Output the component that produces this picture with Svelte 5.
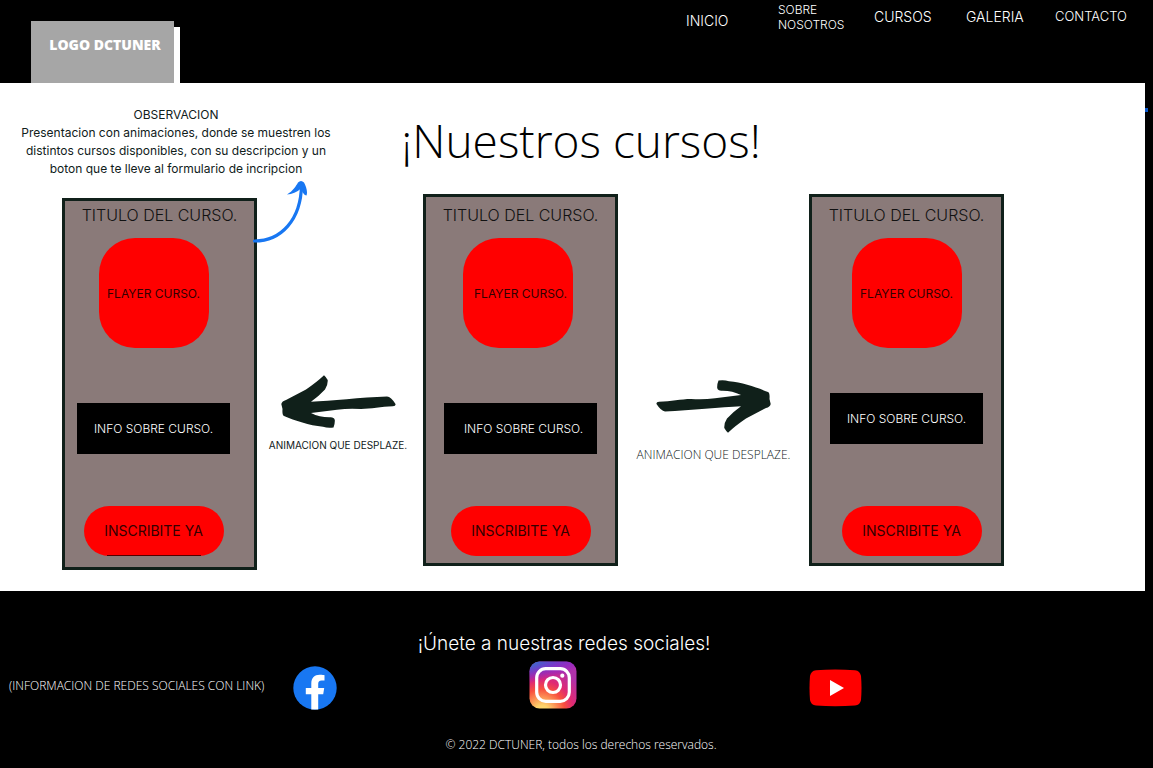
<script>
  const nav = [
    { label: 'INICIO', size: 'low' },
    { label: 'SOBRE NOSOTROS', size: 'small' },
    { label: 'CURSOS', size: '' },
    { label: 'GALERIA', size: '' },
    { label: 'CONTACTO', size: 'mid' }
  ];
</script>

{#snippet course(variant)}
  <article class="card {variant}">
    <div class="frame">
      <h2>TITULO DEL CURSO.</h2>
      <div class="flyer"><span>FLAYER CURSO.</span></div>
      <p class="info"><span>INFO SOBRE CURSO.</span></p>
      <button type="button">INSCRIBITE YA</button>
    </div>
    {#if variant === 'first'}
      <svg class="pointer" viewBox="0 0 58 64" aria-hidden="true">
        <path d="M2.500 61 C29 61 49 40 49.500 5" fill="none" stroke="#1877f2" stroke-width="3.200" stroke-linecap="round" />
        <path d="M35 14.500 C41 11 44 6 46 2.500 Q49 -.5 52 2.500 C54 6 56 12 54.500 15.500 C52.500 15.500 50 12 49 8.500 C45 12 40 14.500 35 14.500Z" fill="#1877f2" />
      </svg>
    {/if}
  </article>
{/snippet}

{#snippet arrow()}
  <svg class="arrow" viewBox="0 0 115 53" aria-hidden="true">
    <path d="M.3 29 Q1 26 5 25 L25 14.500 Q36 7 43 .3 Q45 2 46.700 5 Q47 10 44 14.500 Q38 21 30 26.700 C50 26 80 22.500 106 21.600 Q110 22 114.500 29 Q115 31 112 31.300 C100 31.500 90 34 80 34 Q68 33 56 34.700 L30 38 Q39 42.500 49 42.300 Q53 42 53.800 45 Q54 49 52.500 52.500 Q47 53.500 42 51.700 C28 50.500 14 45.500 3 41 Q1 40 1.500 34Z" fill="#10201a" />
  </svg>
{/snippet}

<div class="page">
  <header>
    <a class="logo" href="#inicio">LOGO DCTUNER</a>
    <nav>
      {#each nav as item}
        <a class={item.size} href="#{item.label.toLowerCase().replace(' ', '-')}">{item.label}</a>
      {/each}
    </nav>
  </header>

  <main>
    <i class="dot"></i>
    <section class="intro">
      <div class="note">
        OBSERVACION
        <p>Presentacion con animaciones, donde se muestren los distintos cursos disponibles, con su descripcion y un boton que te lleve al formulario de incripcion</p>
      </div>
      <h1>¡Nuestros cursos!</h1>
    </section>
    <section class="courses">
      {@render course('first')}
      <div class="slide back">
        {@render arrow()}
        <p>ANIMACION QUE DESPLAZE.</p>
      </div>
      {@render course('second')}
      <div class="slide next">
        {@render arrow()}
        <p>ANIMACION QUE DESPLAZE.</p>
      </div>
      {@render course('third')}
    </section>
  </main>

  <footer>
    <h2>¡Únete a nuestras redes sociales!</h2>
    <div class="social">
      <p>(INFORMACION DE REDES SOCIALES CON LINK)</p>
      <a href="#facebook" aria-label="Facebook">
        <svg width="44" height="44" viewBox="0 0 44 44">
          <circle cx="22" cy="22" r="21.700" fill="#1877f2" />
          <path d="M18.300 43.600V28.300H12.800V22H18.300V17.500C18.300 11.800 21.500 8.800 26.700 8.800C29 8.800 31.500 9.200 31.500 9.200V14.500H28.700C26 14.500 25.200 16 25.200 18V22H31.200L30.200 28.300H25.200V43.600Z" fill="#fff" />
        </svg>
      </a>
      <a href="#instagram" aria-label="Instagram">
        <svg class="insta" width="48" height="48" viewBox="0 0 48 48">
          <defs>
            <radialGradient id="warm" cx="13" cy="51" r="46" gradientUnits="userSpaceOnUse">
              <stop offset="0" stop-color="#ffdd75" />
              <stop offset=".15" stop-color="#ffd36b" />
              <stop offset=".5" stop-color="#f8503e" />
              <stop offset=".68" stop-color="#e02a72" />
              <stop offset="1" stop-color="#b032ab" />
            </radialGradient>
            <radialGradient id="cool" cx="0" cy="0" r="1" gradientUnits="userSpaceOnUse" gradientTransform="translate(-8 3) rotate(78) scale(21 88)">
              <stop offset="0" stop-color="#3771c8" />
              <stop offset=".13" stop-color="#3771c8" />
              <stop offset="1" stop-color="#6600ff" stop-opacity="0" />
            </radialGradient>
          </defs>
          <rect width="47" height="47" x=".5" y=".5" rx="10" fill="url(#warm)" />
          <rect width="47" height="47" x=".5" y=".5" rx="10" fill="url(#cool)" />
          <rect x="7.700" y="7.700" width="32.600" height="32.600" rx="9" fill="none" stroke="#fff" stroke-width="3.200" />
          <circle cx="24" cy="24" r="7.500" fill="none" stroke="#fff" stroke-width="3.200" />
          <circle cx="33.300" cy="14.700" r="2.100" fill="#fff" />
        </svg>
      </a>
      <a href="#youtube" aria-label="YouTube">
        <svg width="53" height="38" viewBox="0 0 53 38">
          <path d="M7 1.200Q26 -.2 46 1.200Q51 1.600 52 7Q53 19 52 31Q51 36 46 36.500Q26 37.800 7 36.500Q2 36 1 31Q0 19 1 7Q2 1.600 7 1.200Z" fill="#f00" />
          <path d="M21 11L35 19L21 27Z" fill="#fff" />
        </svg>
      </a>
    </div>
    <small>© 2022 DCTUNER, todos los derechos reservados.</small>
  </footer>
</div>

<style>
  :global(body) { margin: 0; background: #000; }
  * { box-sizing: border-box; }
  h1, h2, p { margin: 0; font-weight: 400; }
  a { color: inherit; text-decoration: none; }
  svg { display: block; }
  .page { min-height: 100vh; background: #000; color: #fff; font-family: Inter, sans-serif; }

  header { display: flex; justify-content: space-between; align-items: flex-start; height: 83px; padding: 0 20px 0 31px; }
  .logo {
    width: 143px; height: 62px; margin-top: 21px; padding: 14px 0 0 5px;
    background: #a6a6a6; box-shadow: 6px 6px 0 #fff;
    font: 700 14px/20px "Open Sans", sans-serif; font-weight: 800; text-align: center;
  }
  nav { display: grid; grid-template-columns: 92px 96px 92px 89px 78px; align-items: start; font-size: 14px; line-height: 18px; padding-top: 8px; }
  nav a { font-weight: 300; }
  nav .low { padding-top: 4px; }
  nav .small { width: 72px; margin-top: -6px; font-size: 12px; line-height: 15px; }
  nav .mid { font-size: 13px; line-height: 16px; }

  main { position: relative; margin-right: 8px; padding-bottom: 21px; background: #fff; color: #10201a; }
  .dot { position: absolute; right: -3px; top: 25px; width: 3px; height: 4px; background: #0b57c9; }
  .intro { display: grid; grid-template-columns: 352fr 458fr 335fr; min-height: 111px; }
  .note { padding: 23px 16px 0; font-size: 12px; line-height: 18px; text-align: center; }
  h1 { padding-top: 25px; font: 300 46px/64px "Open Sans", sans-serif; text-align: center; color: #000; white-space: nowrap; }

  .courses { display: grid; grid-template-columns: 195fr 166fr 195fr 191fr 195fr; align-items: start; padding: 0 141px 0 62px; }
  .card { position: relative; }
  .frame { display: flex; flex-direction: column; align-items: center; height: 372px; padding-top: 6px; border: 3px solid #10201a; background: #8a7a79; color: #111; }
  .card h2 { font-size: 16px; line-height: 24px; white-space: nowrap; font-weight: 300; }
  .flyer { display: grid; place-items: center; width: 110px; height: 110px; margin-top: 11px; border-radius: 36px; background: #f00; font-size: 12px; white-space: nowrap; color: #300; }
  .info { display: grid; place-items: center; width: 153px; height: 51px; margin-top: 55px; background: #000; color: #fff; font-size: 12px; font-weight: 300; }
  button { position: relative; width: 140px; height: 50px; margin-top: 52px; padding: 0; border: 0; border-radius: 25px; background: #f00; color: #300; font: 400 14px/20px Inter, sans-serif; }

  .first { margin-top: 4px; }
  .first .frame { padding-top: 2px; }
  .first .flyer, .first .info, .first button { margin-right: 12px; }
  .first button::after { content: ""; position: absolute; left: 23px; right: 23px; bottom: 0; height: 1px; background: #500; }
  .second .flyer { margin-right: 6px; }
  .second .flyer span, .second .info span { padding-left: 6px; }
  .third .info { margin-top: 45px; }
  .third button { margin-top: 62px; margin-left: 10px; }

  .pointer { position: absolute; left: calc(100% - 5px); top: -18px; width: 58px; height: 64px; }
  .slide { display: flex; flex-direction: column; align-items: center; padding-top: 181px; white-space: nowrap; }
  .arrow { width: 115px; height: 53px; }
  .back { padding-right: 4px; }
  .back p { margin-top: 8px; font-size: 10px; line-height: 18px; }
  .next { padding-top: 186px; }
  .next .arrow { transform: rotate(180deg); }
  .next p { margin-top: 13px; font: 300 12px/18px "Open Sans", sans-serif; }

  footer { padding: 40px 8px 13px 9px; font-family: "Open Sans", sans-serif; font-weight: 300; }
  footer h2 { padding-right: 26px; font: 300 19px/26px Inter, sans-serif; text-align: center; }
  .social { display: grid; grid-template-columns: 284fr 236fr 280fr 336fr; align-items: center; min-height: 62px; }
  .social p { font-size: 12px; font-weight: 300; line-height: 18px; padding-bottom: 4px; }
  .insta { margin-bottom: 6px; }
  small { display: block; margin-top: 17px; padding-left: 8px; font-size: 12px; line-height: 18px; text-align: center; }
</style>
